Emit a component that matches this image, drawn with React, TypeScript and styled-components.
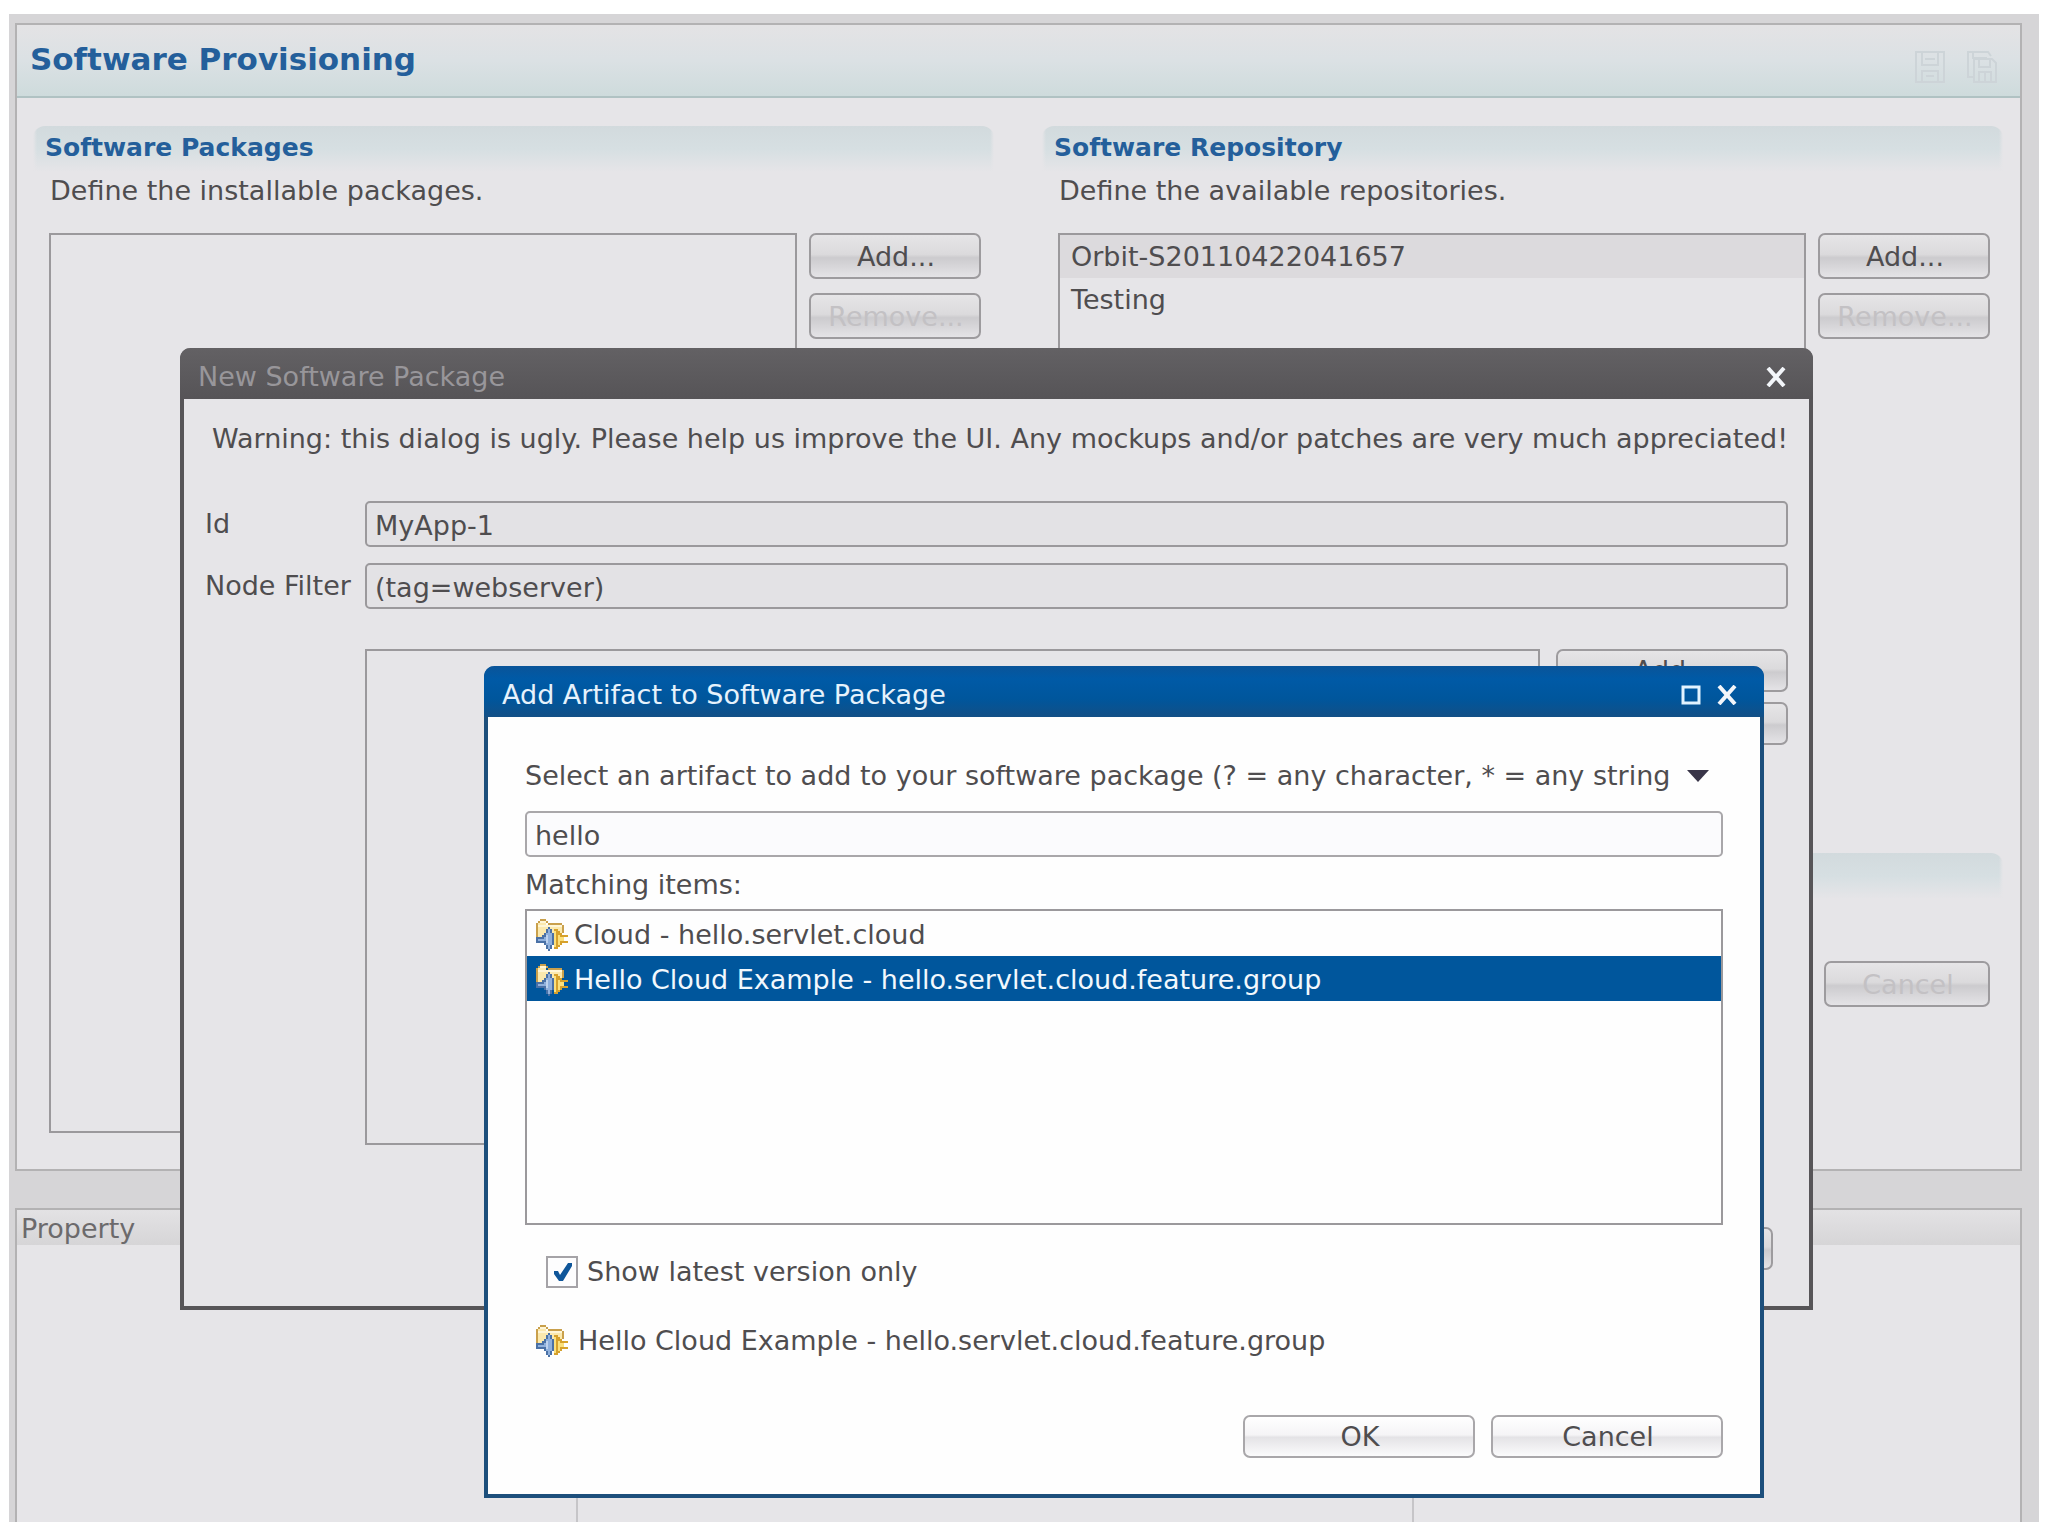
import React, { useState } from 'react';
import styled, { createGlobalStyle } from 'styled-components';

const GlobalStyle = createGlobalStyle`
  *, *::before, *::after { box-sizing: border-box; }
  body {
    margin: 0;
    background: #ffffff;
    color: #4f4d4f;
    font: 27px/32px "DejaVu Sans", Verdana, sans-serif;
  }
  button, input { font: inherit; color: inherit; }
  h1, h2, p, ul { margin: 0; padding: 0; }
`;

const Workspace = styled.main`
  position: relative;
  display: flex;
  flex-direction: column;
  gap: 37px;
  margin: 14px 9px 15px;
  padding: 9px 17px 0 6px;
  background: #d6d5d7;
`;

const Panel = styled.section`
  border: 2px solid #b3b2b3;
  background: #e6e5e8;
`;

const PanelHeader = styled.header`
  display: flex;
  align-items: center;
  justify-content: space-between;
  height: 73px;
  padding: 0 22px 0 13px;
  border-bottom: 2px solid #b0c2c3;
  background: linear-gradient(#e4e3e5, #dbe1e4 50%, #cedbdc);
`;

const PanelTitle = styled.h1`
  padding-bottom: 4px;
  color: #245f9b;
  font-size: 31px;
  line-height: 36px;
`;

const Tools = styled.div`
  display: flex;
  gap: 20px;
  padding-top: 12px;
`;

const ToolButton = styled.button`
  display: flex;
  padding: 0;
  border: 0;
  background: none;
`;

const Columns = styled.div`
  display: grid;
  grid-template-columns: 1fr 1fr;
  gap: 48px;
  padding: 28px 17px 36px 16px;
`;

const Column = styled.div`
  display: flex;
  flex-direction: column;
  gap: 24px;
`;

const SectionBand = styled.div`
  height: 46px;
  padding: 6px 12px;
  border-radius: 12px 12px 0 0;
  background:
    linear-gradient(90deg, #e6e5e8, transparent 4px, transparent calc(100% - 4px), #e6e5e8),
    linear-gradient(#d2dadd, #d6dfe2 50%, #e6e5e8);
`;

const SectionTitle = styled.h2`
  color: #245f9b;
  font-size: 25px;
  line-height: 32px;
`;

const SectionText = styled.p`
  padding: 3px 17px 0;
`;

const SectionBody = styled.div`
  display: flex;
  align-items: flex-start;
  justify-content: flex-end;
  gap: 12px;
  padding: 26px 13px 0 16px;
`;

const ListBox = styled.ul<{ $height: number; $light?: boolean }>`
  flex: 1;
  height: ${(p) => p.$height}px;
  border: 2px solid #9b999c;
  background: ${(p) => (p.$light ? '#fefefe' : 'transparent')};
  list-style: none;
`;

const ListItem = styled.li<{ $marked?: boolean }>`
  height: 43px;
  padding: 6px 11px;
  background: ${(p) => (p.$marked ? '#dcdadd' : 'transparent')};
`;

const Stack = styled.div<{ $gap: number }>`
  display: flex;
  flex-direction: column;
  gap: ${(p) => p.$gap}px;
`;

const PushButton = styled.button<{ $width: number; $height?: number; $light?: boolean }>`
  width: ${(p) => p.$width}px;
  height: ${(p) => p.$height || 46}px;
  padding: 1px 0 0 2px;
  border: 2px solid ${(p) => (p.$light ? '#a9a7aa' : '#9d9b9e')};
  border-radius: 7px;
  background: ${(p) =>
    p.$light
      ? 'linear-gradient(#ffffff, #f5f4f6 46%, #e4e3e6 52%, #fbfbfc)'
      : 'linear-gradient(#e6e5e7, #dbdadc 46%, #cccbce 54%, #e4e3e6)'};
  &:disabled { color: #c3c1c4; }
`;

const PropertyTable = styled.table`
  width: 100%;
  border-collapse: collapse;
  table-layout: fixed;
  color: #6c6a6c;
`;

const HeadCell = styled.th<{ $width?: number }>`
  width: ${(p) => (p.$width ? `${p.$width}px` : 'auto')};
  height: 35px;
  padding: 2px 4px 0;
  background: linear-gradient(#e3e2e4, #d6d5d7);
  font-weight: normal;
  text-align: left;
`;

const BodyCell = styled.td`
  height: 277px;
  padding: 0;
  & + & { border-left: 2px solid #c6c5c8; }
`;

const PropertyPanel = styled(Panel)`
  border-bottom: 0;
`;

const Dialog = styled.section<{ $active?: boolean }>`
  position: absolute;
  border: 4px solid ${(p) => (p.$active ? '#1d4f7c' : '#575558')};
  border-top: 0;
  border-radius: 11px 11px 0 0;
  background: ${(p) => (p.$active ? '#fefefe' : '#e6e5e8')};
`;

const PackageDialog = styled(Dialog)`
  top: 334px;
  left: 171px;
  right: 226px;
  height: 962px;
`;

const ArtifactDialog = styled(Dialog)`
  top: 652px;
  left: 475px;
  right: 275px;
  height: 832px;
`;

const TitleBar = styled.header<{ $active?: boolean }>`
  display: flex;
  align-items: center;
  justify-content: space-between;
  height: 51px;
  margin: 0 -4px;
  padding: 6px 27px 0 18px;
  border-radius: 10px 10px 0 0;
  color: ${(p) => (p.$active ? '#e6f2fc' : '#98969a')};
  background: ${(p) =>
    p.$active ? 'linear-gradient(#0a5499, #005aa6 25%, #00569c 65%, #124f86)' : 'linear-gradient(#636164, #565457)'};
`;

const DialogTitle = styled.h2`
  font-size: 27px;
  font-weight: normal;
  line-height: 32px;
`;

const WindowButtons = styled.div`
  display: flex;
  gap: 16px;
`;

const PackageBody = styled.div`
  padding: 24px 21px 0;
`;

const Warning = styled.p`
  padding-left: 7px;
  white-space: nowrap;
`;

const Form = styled.div`
  display: grid;
  grid-template-columns: 144px 1fr;
  column-gap: 16px;
  row-gap: 16px;
  padding-top: 46px;
`;

const FieldLabel = styled.label`
  padding-top: 7px;
  white-space: nowrap;
`;

const TextField = styled.input<{ $light?: boolean }>`
  width: 100%;
  height: 46px;
  padding: 2px 8px 0;
  border: 2px solid ${(p) => (p.$light ? '#a9a7aa' : '#9b999c')};
  border-radius: 5px;
  background: ${(p) => (p.$light ? '#fbfbfd' : '#e3e2e5')};
  outline: none;
`;

const ArtifactArea = styled.div`
  display: flex;
  align-items: flex-start;
  gap: 16px;
  padding: 40px 0 82px 160px;
`;

const PackageActions = styled.div`
  display: flex;
  justify-content: flex-end;
  gap: 16px;
  padding-right: 15px;
`;

const ArtifactBody = styled.div`
  padding: 43px 37px 0;
`;

const PromptRow = styled.div`
  display: flex;
  align-items: center;
  justify-content: space-between;
  padding: 0 14px 19px 0;
  white-space: nowrap;
`;

const MatchLabel = styled.p`
  padding: 12px 0 8px;
`;

const MatchItem = styled.li<{ $selected?: boolean }>`
  display: flex;
  align-items: center;
  gap: 6px;
  height: 45px;
  padding: 2px 0 0 9px;
  color: ${(p) => (p.$selected ? '#f2f8fd' : 'inherit')};
  background: ${(p) => (p.$selected ? '#00569c' : 'transparent')};
`;

const CheckRow = styled.label`
  display: flex;
  align-items: center;
  gap: 9px;
  padding: 31px 0 0 21px;
`;

const CheckBox = styled.input`
  appearance: none;
  width: 32px;
  height: 32px;
  margin: 0;
  border: 2px solid #a5a3a7;
  background: #fdfdfe;
  &:checked {
    background-image: url("data:image/svg+xml,%3Csvg xmlns='http://www.w3.org/2000/svg' viewBox='0 0 28 28'%3E%3Cpath d='M6 13h4l2 4 8-12h4v3l-9 15h-4l-5-7z' fill='%230f569a'/%3E%3C/svg%3E");
  }
`;

const SelectedRow = styled.div`
  display: flex;
  align-items: center;
  gap: 10px;
  padding: 37px 0 58px 11px;
`;

const DialogActions = styled.div`
  display: flex;
  justify-content: flex-end;
  gap: 16px;
`;

const SaveIcon = () => (
  <svg width="32" height="32" viewBox="0 0 32 32" fill="none" stroke="#cdd4d8" strokeWidth="2" aria-hidden="true">
    <path d="M2 1h28v30H2zM8 2v12h16V2M8 30V20h16v10M12 25h8M11 8h10" />
  </svg>
);

const SaveAllIcon = () => (
  <svg width="32" height="32" viewBox="0 0 32 32" fill="none" stroke="#cdd4d8" strokeWidth="2" aria-hidden="true">
    <path d="M7 26H2V1h20l3 4M7 2v5h14M8 8h18l4 4v19H8zM13 9v7h11V9M13 30v-9h12v9M19 22v8" />
  </svg>
);

const FeatureIcon = () => (
  <svg width="32" height="32" viewBox="0 0 16 16" shapeRendering="crispEdges" aria-hidden="true">
    <path fill="#fbe9ae" d="M1 1h4v2h8v8H1z" />
    <path fill="#fff6d6" d="M2 1h3v1H2zM1 3h12v1H1z" />
    <path fill="#c9a04c" d="M2 0h3v1H2zM1 1h1v1H1zM5 1h1v1H5zM6 2h7v1H6zM0 2h1v8H0zM13 3h1v4h-1z" />
    <path fill="#d6a12c" d="M9 5h2v1h1v1h1v1h3v1h-2v2h2v1h-3v1h-1v1h-1v1H9z" />
    <path fill="#fbe07c" d="M9 6h1v8H9zM11 8h1v5h-1zM12 9h2v2h-2z" />
    <path fill="#4a71a6" d="M6 4h1v1h1v2h1v6H8v2H7v1H6v-1H5v-2H4v-1H0V9h3V8h1V7h1V5h1z" />
    <path fill="#8fb0dc" d="M6 5h1v10H6zM5 7h1v6H5zM4 9h1v2H4zM1 10h3v1H1zM7 7h1v6H7z" />
    <path fill="#bdd2ee" d="M5 8h1v4H5z" />
  </svg>
);

const CloseIcon = () => (
  <svg width="20" height="20" viewBox="0 0 20 20" stroke="#f3f6fa" strokeWidth="4" aria-hidden="true">
    <path d="M2 1l16 18M18 1L2 19" />
  </svg>
);

const MaximizeIcon = () => (
  <svg width="20" height="20" viewBox="0 0 20 20" fill="none" stroke="#e2f3ff" strokeWidth="3" aria-hidden="true">
    <path d="M2 2h16v16H2z" />
  </svg>
);

const MenuArrow = () => (
  <svg width="22" height="12" viewBox="0 0 22 12" fill="#393548" aria-hidden="true">
    <path d="M0 0h22L11 12z" />
  </svg>
);

const packageName = 'Hello Cloud Example - hello.servlet.cloud.feature.group';
const matches = ['Cloud - hello.servlet.cloud', packageName];

export default function App() {
  const [id, setId] = useState('MyApp-1');
  const [filter, setFilter] = useState('(tag=webserver)');
  const [query, setQuery] = useState('hello');
  const [latest, setLatest] = useState(true);
  const [selected, setSelected] = useState(packageName);

  return (
    <>
      <GlobalStyle />
      <Workspace>
        <Panel>
          <PanelHeader>
            <PanelTitle>Software Provisioning</PanelTitle>
            <Tools>
              <ToolButton disabled aria-label="Save"><SaveIcon /></ToolButton>
              <ToolButton disabled aria-label="Save all"><SaveAllIcon /></ToolButton>
            </Tools>
          </PanelHeader>
          <Columns>
            <Column>
              <section>
                <SectionBand><SectionTitle>Software Packages</SectionTitle></SectionBand>
                <SectionText>Define the installable packages.</SectionText>
                <SectionBody>
                  <ListBox $height={900} aria-label="Software packages" />
                  <Stack $gap={14}>
                    <PushButton $width={172}>Add...</PushButton>
                    <PushButton $width={172} disabled>Remove...</PushButton>
                  </Stack>
                </SectionBody>
              </section>
            </Column>
            <Column>
              <section>
                <SectionBand><SectionTitle>Software Repository</SectionTitle></SectionBand>
                <SectionText>Define the available repositories.</SectionText>
                <SectionBody>
                  <ListBox $height={596} aria-label="Repositories">
                    <ListItem $marked>Orbit-S20110422041657</ListItem>
                    <ListItem>Testing</ListItem>
                  </ListBox>
                  <Stack $gap={14}>
                    <PushButton $width={172}>Add...</PushButton>
                    <PushButton $width={172} disabled>Remove...</PushButton>
                  </Stack>
                </SectionBody>
              </section>
              <Stack $gap={36}>
                <SectionBand />
                <SectionBody>
                  <PushButton $width={166} disabled>Cancel</PushButton>
                </SectionBody>
              </Stack>
            </Column>
          </Columns>
        </Panel>

        <PropertyPanel>
          <PropertyTable>
            <thead>
              <tr>
                <HeadCell $width={560} scope="col">Property</HeadCell>
                <HeadCell as="td" $width={836} />
                <HeadCell as="td" />
              </tr>
            </thead>
            <tbody>
              <tr>
                <BodyCell />
                <BodyCell />
                <BodyCell />
              </tr>
            </tbody>
          </PropertyTable>
        </PropertyPanel>

        <PackageDialog role="dialog" aria-label="New Software Package">
          <TitleBar>
            <DialogTitle>New Software Package</DialogTitle>
            <ToolButton aria-label="Close"><CloseIcon /></ToolButton>
          </TitleBar>
          <PackageBody>
            <Warning>
              Warning: this dialog is ugly. Please help us improve the UI. Any mockups and/or patches are very much appreciated!
            </Warning>
            <Form>
              <FieldLabel htmlFor="package-id">Id</FieldLabel>
              <TextField id="package-id" value={id} onChange={(e) => setId(e.target.value)} />
              <FieldLabel htmlFor="node-filter">Node Filter</FieldLabel>
              <TextField id="node-filter" value={filter} onChange={(e) => setFilter(e.target.value)} />
            </Form>
            <ArtifactArea>
              <ListBox $height={496} aria-label="Artifacts" />
              <Stack $gap={10}>
                <PushButton $width={232} $height={43}>Add...</PushButton>
                <PushButton $width={232} $height={43} disabled aria-label="Remove artifact" />
              </Stack>
            </ArtifactArea>
            <PackageActions>
              <PushButton $width={232} $height={43} aria-label="Close package dialog" />
            </PackageActions>
          </PackageBody>
        </PackageDialog>

        <ArtifactDialog $active role="dialog" aria-label="Add Artifact to Software Package">
          <TitleBar $active>
            <DialogTitle>Add Artifact to Software Package</DialogTitle>
            <WindowButtons>
              <ToolButton aria-label="Maximize"><MaximizeIcon /></ToolButton>
              <ToolButton aria-label="Close"><CloseIcon /></ToolButton>
            </WindowButtons>
          </TitleBar>
          <ArtifactBody>
            <PromptRow>
              <label htmlFor="artifact-query">
                Select an artifact to add to your software package (? = any character, * = any string
              </label>
              <ToolButton aria-label="View menu"><MenuArrow /></ToolButton>
            </PromptRow>
            <TextField $light id="artifact-query" value={query} onChange={(e) => setQuery(e.target.value)} />
            <MatchLabel>Matching items:</MatchLabel>
            <ListBox $light $height={316} role="listbox" aria-label="Matching items">
              {matches.map((name) => (
                <MatchItem
                  key={name}
                  role="option"
                  aria-selected={name === selected}
                  $selected={name === selected}
                  onClick={() => setSelected(name)}
                >
                  <FeatureIcon />
                  {name}
                </MatchItem>
              ))}
            </ListBox>
            <CheckRow>
              <CheckBox type="checkbox" checked={latest} onChange={(e) => setLatest(e.target.checked)} />
              Show latest version only
            </CheckRow>
            <SelectedRow>
              <FeatureIcon />
              {selected}
            </SelectedRow>
            <DialogActions>
              <PushButton $light $width={232} $height={43}>OK</PushButton>
              <PushButton $light $width={232} $height={43}>Cancel</PushButton>
            </DialogActions>
          </ArtifactBody>
        </ArtifactDialog>
      </Workspace>
    </>
  );
}
